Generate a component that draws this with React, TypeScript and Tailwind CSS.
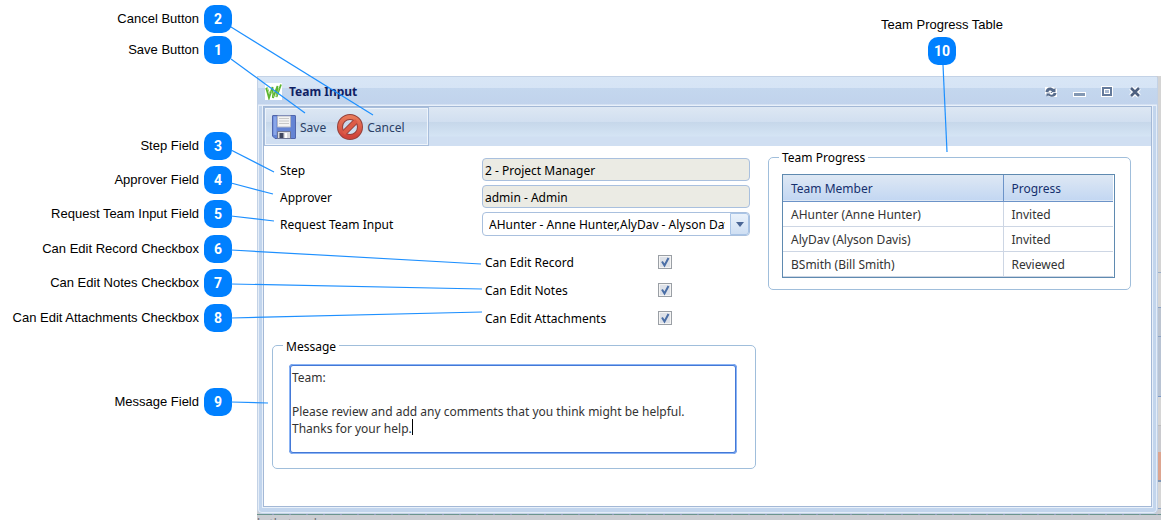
import React, { useState } from "react";

type Callout = { id: number; label: string; gap: string };

// numbered labels down the left side, with the space above each one
const CALLOUTS: Callout[] = [
  { id: 2, label: "Cancel Button", gap: "mt-[5px]" },
  { id: 1, label: "Save Button", gap: "mt-[3px]" },
  { id: 3, label: "Step Field", gap: "mt-[68px]" },
  { id: 4, label: "Approver Field", gap: "mt-[6px]" },
  { id: 5, label: "Request Team Input Field", gap: "mt-[6px]" },
  { id: 6, label: "Can Edit Record Checkbox", gap: "mt-[7px]" },
  { id: 7, label: "Can Edit Notes Checkbox", gap: "mt-[6px]" },
  { id: 8, label: "Can Edit Attachments Checkbox", gap: "mt-[7px]" },
  { id: 9, label: "Message Field", gap: "mt-[56px]" },
];

const LEADERS = [
  [231, 27, 373, 115],
  [231, 59, 305, 113],
  [231, 150, 274, 172],
  [231, 183, 273, 194],
  [231, 216, 274, 221],
  [231, 250, 481, 264],
  [231, 284, 482, 289],
  [231, 318, 482, 312],
  [231, 402, 268, 403],
  [943, 65, 947, 152],
];

const TEAM = [
  { member: "AHunter (Anne Hunter)", progress: "Invited" },
  { member: "AlyDav (Alyson Davis)", progress: "Invited" },
  { member: "BSmith (Bill Smith)", progress: "Reviewed" },
];

const MESSAGE =
  "Team:\n\nPlease review and add any comments that you think might be helpful.\nThanks for your help.";

const Badge: React.FC<{ n: number }> = ({ n }) => (
  <span className="flex size-7 shrink-0 items-center justify-center rounded-[10px] bg-[#0080ff] font-['Roboto',sans-serif] text-[14px] font-bold text-white">
    {n}
  </span>
);

const Logo = () => (
  <svg viewBox="0 0 17 17" className="size-[17px] bg-white" fill="none">
    <path d="M1 5c1 2 2 6 3 10L7.500 4l.5 11L12.500 3l-1 11L16 1.500" stroke="#5cb531" strokeWidth="1.8" />
    <path d="M2 4l3 7M6 8l3 6M14 5l-3 9" stroke="#9bd36f" strokeWidth="1" />
  </svg>
);

const SaveIcon = () => (
  <svg viewBox="0 0 24 24" className="size-6">
    <path d="M1 .5h22a.5.5 0 0 1 .5.5v22a.5.5 0 0 1-.5.5H3L.5 21V1A.5.5 0 0 1 1 .5z" fill="#6484d4" stroke="#5065ab" />
    <path d="M1.500 1.500h3V20h-3z" fill="#8aa6e8" />
    <path d="M5.500 1h13v11h-13z" fill="#f3f3f3" stroke="#b4b8c6" />
    <path d="M7 3.500h10M7 6h10M7 8.500h10" stroke="#c8c8c8" />
    <path d="M5.500 16.500h13v7h-13z" fill="#d9dade" stroke="#6d7594" />
    <path d="M7.500 18h4v5h-4z" fill="#3f465e" />
    <path d="M13 18h2v5h-2z" fill="#fff" />
  </svg>
);

const CancelIcon = () => (
  <svg viewBox="0 0 26 26" className="size-[26px]" fill="none">
    <defs>
      <linearGradient id="ban" x1="0" y1="0" x2="0" y2="1">
        <stop offset="0" stopColor="#e8795a" />
        <stop offset="1" stopColor="#d0443a" />
      </linearGradient>
    </defs>
    <circle cx="13" cy="13" r="10" stroke="#94403a" strokeWidth="6" />
    <path d="M6.500 19.500l13-13" stroke="#94403a" strokeWidth="6" />
    <circle cx="13" cy="13" r="10" stroke="url(#ban)" strokeWidth="4" />
    <path d="M6.500 19.500l13-13" stroke="#dc5b46" strokeWidth="4" />
  </svg>
);

const WindowButtons = () => (
  <div className="flex gap-[14px]">
    <button aria-label="Refresh" className="size-[14px]">
      <svg viewBox="0 0 14 14" className="size-[14px]">
        <path d="M1 2h8l4 2v8H6L1 9z" fill="#fff" />
        <g fill="#566b8b">
          <path d="M1.500 7C1.500 4 4 2 7 2.500L10 4l1.500-1V8H6.500L8 6.500C6.500 5 5 5.200 4.500 7z" />
          <path d="M12.500 8c0 2.500-2.500 4.200-5.500 3.700L4 10.500 2.500 11.500V7.500h4L5.500 9C7 10.200 9 10 9.500 8z" />
        </g>
        <path d="M1 8h5M8 7.500h5" stroke="#fff" strokeWidth=".8" />
      </svg>
    </button>
    <button aria-label="Minimize" className="size-[14px]">
      <svg viewBox="0 0 14 14" className="size-[14px]">
        <path d="M1 7h13v5H1z" fill="#fff" />
        <path d="M2 8h11v3H2z" fill="#8398b3" />
      </svg>
    </button>
    <button aria-label="Maximize" className="size-[14px]">
      <svg viewBox="0 0 14 14" className="size-[14px]">
        <path d="M1 1h12v11H1z" fill="#fff" />
        <path d="M2 2h10v9H2z" fill="#647a9b" />
        <path d="M4 4h6v5H4z" fill="#fff" />
        <path d="M5 5h4v3H5z" fill="#a9bad2" />
      </svg>
    </button>
    <button aria-label="Close" className="size-[14px]">
      <svg viewBox="0 0 14 14" className="size-[14px]">
        <path d="M3 3l8 8M11 3l-8 8" stroke="#fff" strokeWidth="5" />
        <path d="M3 3l8 8M11 3l-8 8" stroke="#4d6080" strokeWidth="2.600" />
      </svg>
    </button>
  </div>
);

const CheckRow: React.FC<{ id: string; label: string }> = ({ id, label }) => {
  const [on, setOn] = useState(true);
  return (
    <div className="flex h-7 items-center">
      <label htmlFor={id} className="w-[173px] pt-[2px]">
        {label}
      </label>
      <span className="relative size-[14px]">
        <input
          id={id}
          type="checkbox"
          checked={on}
          onChange={(e) => setOn(e.target.checked)}
          className="block size-[14px] appearance-none border border-[#9a9fa5] bg-[#dde1e8] shadow-[inset_0_0_0_1px_#f4f4f4]"
        />
        {on && (
          <svg viewBox="0 0 14 14" className="pointer-events-none absolute inset-0" fill="none">
            <path d="M4 6.500l2.500 4L10.500 3" stroke="#4a6ea6" strokeWidth="2" />
          </svg>
        )}
      </span>
    </div>
  );
};

const TeamForm = () => {
  const [message, setMessage] = useState(MESSAGE);

  return (
    <div className="w-[486px] shrink-0">
      <div className="grid grid-cols-[202px_268px] gap-y-1 pl-2">
        <label htmlFor="step" className="self-center pt-[2px]">Step</label>
        <input
          id="step"
          readOnly
          value="2 - Project Manager"
          className="h-[23px] rounded-[4px] border border-[#a9c0de] bg-[#ebebe4] px-[2px] pt-[2px]"
        />
        <label htmlFor="approver" className="self-center pt-[2px]">Approver</label>
        <input
          id="approver"
          readOnly
          value="admin - Admin"
          className="h-[23px] rounded-[4px] border border-[#a9c0de] bg-[#ebebe4] px-[2px] pt-[2px]"
        />
        <label htmlFor="team" className="self-center pt-[2px]">Request Team Input</label>
        <div className="relative">
          <select
            id="team"
            className="block h-6 w-full appearance-none rounded-[4px] border border-[#a9c0de] bg-white pt-[2px] pr-[24px] pl-[6px]"
          >
            <option>AHunter - Anne Hunter,AlyDav - Alyson Davis,BSmith - Bill Smith</option>
          </select>
          <span className="pointer-events-none absolute inset-y-px right-px flex w-[19px] items-center justify-center rounded-r-[3px] border border-[#a9c4e6] bg-linear-to-b from-[#eaf2fb] to-[#cfdff3]">
            <svg viewBox="0 0 8 5" className="h-[5px] w-2">
              <path d="M0 0h8L4 5z" fill="#4a6696" />
            </svg>
          </span>
        </div>
      </div>

      <div className="mt-3 pl-[213px]">
        <CheckRow id="record" label="Can Edit Record" />
        <CheckRow id="notes" label="Can Edit Notes" />
        <CheckRow id="attachments" label="Can Edit Attachments" />
      </div>

      <fieldset className="mt-[3px] mr-[2px] rounded-[5px] border border-[#a0bedb] pr-[18px] pb-[14px] pl-4">
        <legend className="-ml-[6px] px-[3px] pt-1 leading-4">
          <label htmlFor="message">Message</label>
        </legend>
        <div className="relative mt-[9px]">
          <textarea
            id="message"
            value={message}
            onChange={(e) => setMessage(e.target.value)}
            className="block h-[90px] w-full resize-none rounded-[4px] border-2 border-[#4378d6] px-[1px] py-[3px] leading-[17px] text-[#333] outline-1 -outline-offset-1 outline-[#8bb4f5]"
          />
          <span className="absolute top-[55px] left-[123px] h-4 w-px bg-black" />
        </div>
      </fieldset>
    </div>
  );
};

const TeamProgress = () => (
  <fieldset className="-mt-[10px] mr-5 min-w-0 flex-1 self-start rounded-[5px] border border-[#a0bedb] px-[13px] pb-[11px]">
    <legend className="-ml-[3px] px-[3px] pt-[2px] leading-4">Team Progress</legend>
    <div className="mt-2 mr-[2px] border border-[#5f8ab0] pr-px">
      <table className="w-full border-collapse text-left text-[#333]">
        <thead>
          <tr className="h-[26px] border-b border-[#6c93c8] bg-linear-to-b from-[#dee8f4] to-[#c3d7f2] text-[#15306e]">
            <th className="w-[220px] border-r border-[#6c93c8] px-2 pt-[2px] font-normal">Team Member</th>
            <th className="px-2 pt-[2px] font-normal">Progress</th>
          </tr>
        </thead>
        <tbody>
          {TEAM.map((t) => (
            <tr key={t.member} className="h-[25px] border-b border-[#cdd6e4]">
              <td className="border-r border-[#cdd6e4] px-2 pt-[2px]">{t.member}</td>
              <td className="px-2 pt-[2px]">{t.progress}</td>
            </tr>
          ))}
        </tbody>
      </table>
    </div>
  </fieldset>
);

const App: React.FC = () => {
  return (
    <div className="relative flex h-[520px] items-start bg-white text-black">
      <div className="flex w-[232px] shrink-0 flex-col font-['Liberation_Sans',sans-serif] text-[13px]">
        {CALLOUTS.map((c) => (
          <div key={c.id} className={`flex items-center justify-end gap-[5px] ${c.gap}`}>
            <span>{c.label}</span>
            <Badge n={c.id} />
          </div>
        ))}
      </div>

      <div className="mr-[3px] ml-[25px] flex h-full min-w-0 flex-1 flex-col">
        <div className="ml-[624px] flex h-[76px] w-[122px] flex-col items-center pt-4 font-['Liberation_Sans',sans-serif] text-[13px]">
          <span className="leading-[17px] whitespace-nowrap">Team Progress Table</span>
          <span className="mt-1">
            <Badge n={10} />
          </span>
        </div>

        {/* page behind the dialog */}
        <div className="flex min-h-0 flex-1 flex-col overflow-hidden bg-[#cbcdd2] font-['Noto_Sans',sans-serif] text-[12px] leading-[18px]">
          <div className="flex">
            <div className="flex min-w-0 flex-1 flex-col rounded-t-[3px] rounded-b-[5px] border border-[#c3d2e6] bg-[#c2d5ed] shadow-[inset_0_0_0_1px_#e4edf8]">
              <div className="flex h-[29px] items-center justify-between bg-[linear-gradient(#d8e6f6_0,#d6e4f5_11px,#c4d7ee_11px,#c1d3ec_27px,#e6eef9_28px)] pr-[15px] pl-[7px]">
                <div className="flex items-center gap-[7px]">
                  <Logo />
                  <h1 className="font-bold text-[#0f2063]">Team Input</h1>
                </div>
                <WindowButtons />
              </div>

              <div className="mx-[5px] mb-[6px] flex h-[401px] flex-col border border-[#a3b8d6] bg-white outline-1 outline-[#e8f0fa]">
                <div className="flex h-[39px] bg-[linear-gradient(#dde7f3_0,#d1dff0_15px,#c6d7ea_15px,#d4e4f4_29px,#d0dff2_30px)]">
                  <div className="flex w-[165px] items-center border border-[#a8bedc] pl-[7px] text-[#2b3f66] shadow-[inset_0_0_0_1px_#eef4fb]">
                    <button className="flex items-center gap-1">
                      <SaveIcon />
                      <span className="pt-[2px]">Save</span>
                    </button>
                    <button className="ml-[11px] flex items-center gap-1">
                      <CancelIcon />
                      <span className="pt-[2px]">Cancel</span>
                    </button>
                  </div>
                </div>

                <div className="flex gap-[10px] pt-3 pl-2">
                  <TeamForm />
                  <TeamProgress />
                </div>
              </div>
            </div>

            <div className="flex w-[3px] flex-col">
              <div className="h-[197px] border-b border-[#9aaec8] bg-[#d4d4d4]" />
              <div className="h-[35px] border-b border-[#8ba3c4] bg-[#d6d6d6]" />
              <div className="h-[29px] border-b border-[#8ba3c4] bg-[#bcc4d0]" />
              <div className="h-[60px] border-b border-[#7898c8] bg-[#b8c3d3]" />
              <div className="h-[29px] border-b border-[#bdbdbd] bg-[#d6d6d6]" />
              <div className="h-[26px] bg-[#cacace]" />
              <div className="h-[30px] border-b-2 border-[#8096b4] bg-[#dda590]" />
              <div className="h-[27px] border-b border-[#8ba3c4] bg-[#d6d6d6]" />
            </div>
          </div>
          <div className="h-px shrink-0 bg-[repeating-linear-gradient(90deg,#6b958f_0_15px,#8b9ab8_15px_17px)]" />
          <p className="text-[#6d6d75]">ly that and</p>
        </div>
      </div>

      <svg className="pointer-events-none absolute inset-0 size-full" stroke="#1e90ff" strokeWidth="1.200">
        {LEADERS.map(([x1, y1, x2, y2], i) => (
          <line key={i} x1={x1} y1={y1} x2={x2} y2={y2} />
        ))}
      </svg>
    </div>
  );
};

export default App;
